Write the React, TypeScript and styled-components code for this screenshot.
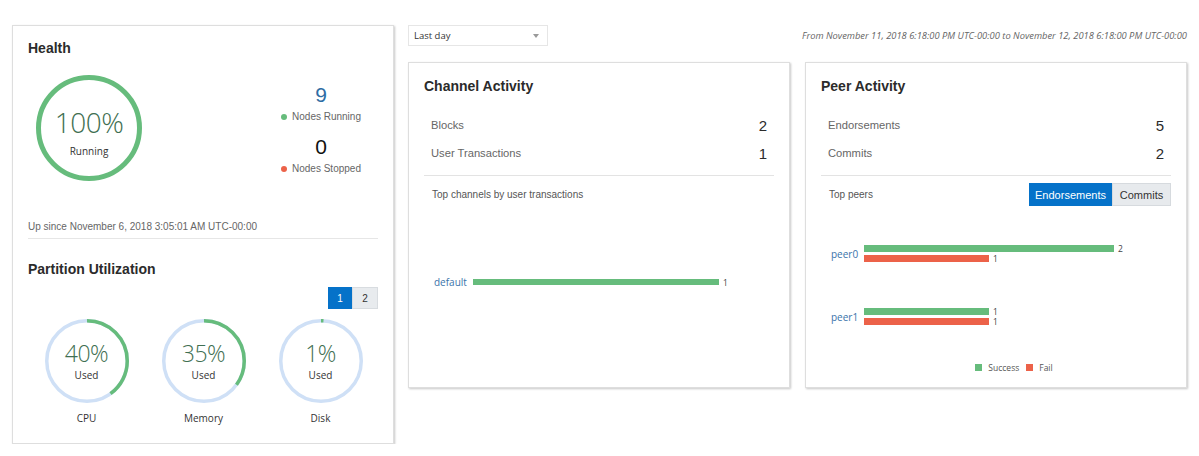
import React from "react";
import styled, { createGlobalStyle } from "styled-components";

const GREEN = "#66bc7c";
const RED = "#ec6249";
const BLUE = "#0572c9";
const TRACK = "#cfe0f6";
const SEGOE = `"Open Sans", "Noto Sans", sans-serif`;

const Global = createGlobalStyle`
  html, body { margin: 0; padding: 0; background: #fff; }
  body { font-family: "Liberation Sans", Arial, sans-serif; color: #333; }
`;

const Page = styled.div`
  display: flex;
  gap: 14px;
  padding: 25px 0 0 12px;
  width: 1199px;
  box-sizing: border-box;
`;

const Card = styled.section<{ $w: number; $h: number }>`
  width: ${(p) => p.$w}px;
  height: ${(p) => p.$h}px;
  box-sizing: border-box;
  border: 1px solid #dedede;
  box-shadow: 1px 1px 2px rgba(0, 0, 0, 0.22);
  background: #fff;
  padding: 0 15px;
  display: flex;
  flex-direction: column;
`;

const Title = styled.h2<{ $top?: number }>`
  margin: ${(p) => p.$top ?? 14}px 0 0 0;
  font-size: 14px;
  line-height: 17px;
  font-weight: 700;
  color: #2b2b2b;
`;

/* ---------- Health ---------- */

const HealthBody = styled.div`
  display: flex;
  align-items: center;
  justify-content: space-between;
  margin-top: 18px;
  padding: 0 12px 0 8px;
`;

const Ring = styled.div<{ $size: number }>`
  display: grid;
  width: ${(p) => p.$size}px;
  height: ${(p) => p.$size}px;
  & > * {
    grid-area: 1 / 1;
  }
`;

const RingText = styled.div<{ $shift: number }>`
  display: flex;
  flex-direction: column;
  align-items: center;
  justify-content: center;
  transform: translateY(${(p) => p.$shift}px);
`;

const BigPct = styled.span<{ $size: number }>`
  font-family: ${SEGOE};
  font-weight: 300;
  font-size: ${(p) => p.$size}px;
  line-height: 1;
  color: #3f6f52;
  letter-spacing: -0.5px;
`;

const RingLabel = styled.span<{ $gap: number }>`
  font-family: ${SEGOE};
  font-size: 10px;
  line-height: 12px;
  color: #333;
  margin-top: ${(p) => p.$gap}px;
`;

const Nodes = styled.div`
  display: flex;
  flex-direction: column;
  align-items: center;
  width: 90px;
`;

const NodeCount = styled.span<{ $color: string; $gap?: number }>`
  font-size: 21px;
  line-height: 28px;
  color: ${(p) => p.$color};
  margin-top: ${(p) => p.$gap ?? 0}px;
`;

const NodeLabel = styled.span<{ $dot: string }>`
  display: flex;
  align-items: center;
  gap: 5px;
  font-size: 10px;
  line-height: 12px;
  margin-top: 2px;
  color: #666;
  &::before {
    content: "";
    width: 6px;
    height: 6px;
    border-radius: 50%;
    background: ${(p) => p.$dot};
  }
`;

const UpSince = styled.div`
  margin-top: 39px;
  font-size: 10px;
  line-height: 13px;
  color: #666;
  padding-bottom: 5px;
  border-bottom: 1px solid #e6e6e6;
`;

const PagerRow = styled.div`
  display: flex;
  justify-content: flex-end;
  margin-top: 9px;
`;

const PageBtn = styled.button<{ $active?: boolean }>`
  width: ${(p) => (p.$active ? 24 : 26)}px;
  height: 22px;
  padding: 0;
  border: 1px solid ${(p) => (p.$active ? BLUE : "#d8dce0")};
  background: ${(p) => (p.$active ? BLUE : "#e8ebee")};
  color: ${(p) => (p.$active ? "#fff" : "#333")};
  font-family: "Liberation Sans", Arial, sans-serif;
  font-size: 10px;
`;

const Gauges = styled.div`
  display: grid;
  grid-template-columns: repeat(3, 117px);
  margin-top: 10px;
`;

const Gauge = styled.div`
  display: flex;
  flex-direction: column;
  align-items: center;
`;

const GaugeName = styled.span`
  font-family: ${SEGOE};
  font-size: 10px;
  line-height: 13px;
  color: #333;
  margin-top: 9px;
`;

function Arc({ size, stroke, pct, track }: { size: number; stroke: number; pct: number; track?: string }) {
  const r = (size - stroke) / 2;
  const c = 2 * Math.PI * r;
  return (
    <svg width={size} height={size} viewBox={`0 0 ${size} ${size}`}>
      {track && <circle cx={size / 2} cy={size / 2} r={r} fill="none" stroke={track} strokeWidth={stroke} />}
      <circle
        cx={size / 2}
        cy={size / 2}
        r={r}
        fill="none"
        stroke={GREEN}
        strokeWidth={stroke}
        strokeDasharray={`${(c * pct) / 100} ${c}`}
        transform={`rotate(-90 ${size / 2} ${size / 2})`}
      />
    </svg>
  );
}

/* ---------- activity cards ---------- */

const RightCol = styled.div`
  display: flex;
  flex-direction: column;
  width: 779px;
`;

const TopBar = styled.div`
  display: flex;
  justify-content: space-between;
  align-items: center;
  height: 21px;
`;

const Select = styled.div`
  width: 140px;
  height: 21px;
  box-sizing: border-box;
  border: 1px solid #e6e6e6;
  display: flex;
  align-items: center;
  justify-content: space-between;
  padding: 0 8px 0 5px;
  font-family: ${SEGOE};
  font-size: 9.5px;
  color: #333;
  &::after {
    content: "";
    border-left: 3px solid transparent;
    border-right: 3px solid transparent;
    border-top: 4px solid #9a9a9a;
  }
`;

const Range = styled.div`
  font-family: ${SEGOE};
  font-style: italic;
  font-size: 9.35px;
  color: #666;
  white-space: nowrap;
`;

const Cards = styled.div`
  display: flex;
  gap: 15px;
  margin-top: 16px;
`;

const Stats = styled.div`
  margin-top: 16px;
  padding-bottom: 8px;
  border-bottom: 1px solid #e3e3e3;
`;

const StatRow = styled.div`
  display: flex;
  justify-content: space-between;
  align-items: center;
  height: 28px;
  padding: 0 7px;
`;

const StatLabel = styled.span`
  font-size: 11.2px;
  color: #666;
`;

const StatValue = styled.span`
  font-size: 15px;
  color: #2b2b2b;
`;

const SubHeader = styled.div`
  display: flex;
  justify-content: space-between;
  align-items: center;
  height: 23px;
  margin-top: 7px;
  padding-left: 8px;
`;

const SubTitle = styled.span`
  font-size: 10px;
  color: #555;
`;

const Toggle = styled.div`
  display: flex;
`;

const ToggleBtn = styled.button<{ $active?: boolean; $w: number }>`
  width: ${(p) => p.$w}px;
  height: 23px;
  padding: 0;
  border: 1px solid ${(p) => (p.$active ? BLUE : "#d6dade")};
  background: ${(p) => (p.$active ? BLUE : "#e7eaed")};
  color: ${(p) => (p.$active ? "#fff" : "#333")};
  font-family: "Liberation Sans", Arial, sans-serif;
  font-size: 11px;
`;

const ChannelChart = styled.div`
  height: 152px;
  display: flex;
  align-items: center;
  padding-left: 10px;
`;

const ChartLabel = styled.span<{ $w: number }>`
  font-family: ${SEGOE};
  font-size: 10px;
  color: #3a73aa;
  width: ${(p) => p.$w}px;
  flex: none;
`;

const Bar = styled.div<{ $color: string; $h: number }>`
  height: ${(p) => p.$h}px;
  background: ${(p) => p.$color};
  flex: none;
`;

const BarValue = styled.span`
  font-family: ${SEGOE};
  font-size: 8.5px;
  line-height: 7px;
  color: #444;
  margin-left: 4px;
`;

const BarLine = styled.div`
  display: flex;
  align-items: center;
  height: 7px;
`;

const PeerChart = styled.div`
  display: flex;
  flex-direction: column;
  gap: 46px;
  margin-top: 39px;
  padding-left: 10px;
`;

const PeerGroup = styled.div`
  display: flex;
  align-items: center;
`;

const PeerBars = styled.div`
  display: flex;
  flex-direction: column;
  gap: 3px;
`;

const Legend = styled.div`
  display: flex;
  justify-content: center;
  align-items: center;
  gap: 7px;
  margin-top: 37px;
  padding-left: 36px;
  font-family: ${SEGOE};
  font-size: 8.5px;
  color: #555;
`;

const LegendItem = styled.span<{ $color: string }>`
  display: flex;
  align-items: center;
  gap: 6px;
  &::before {
    content: "";
    width: 7px;
    height: 7px;
    background: ${(p) => p.$color};
  }
`;

const UNIT = 125;

function PeerRow({ name, ok, fail }: { name: string; ok: number; fail: number }) {
  return (
    <PeerGroup>
      <ChartLabel $w={33}>{name}</ChartLabel>
      <PeerBars>
        <BarLine>
          <Bar $color={GREEN} $h={7} style={{ width: ok * UNIT }} />
          <BarValue>{ok}</BarValue>
        </BarLine>
        <BarLine>
          <Bar $color={RED} $h={7} style={{ width: fail * UNIT }} />
          <BarValue>{fail}</BarValue>
        </BarLine>
      </PeerBars>
    </PeerGroup>
  );
}

export default function App() {
  return (
    <>
      <Global />
      <Page>
        <Card $w={382} $h={419}>
          <Title>Health</Title>
          <HealthBody>
            <Ring $size={106}>
              <Arc size={106} stroke={5} pct={100} />
              <RingText $shift={4}>
                <BigPct $size={28}>100%</BigPct>
                <RingLabel $gap={9}>Running</RingLabel>
              </RingText>
            </Ring>
            <Nodes>
              <NodeCount $color="#2e6da4">9</NodeCount>
              <NodeLabel $dot={GREEN}>Nodes Running</NodeLabel>
              <NodeCount $color="#111" $gap={10}>0</NodeCount>
              <NodeLabel $dot={RED}>Nodes Stopped</NodeLabel>
            </Nodes>
          </HealthBody>
          <UpSince>Up since November 6, 2018 3:05:01 AM UTC-00:00</UpSince>
          <Title $top={22}>Partition Utilization</Title>
          <PagerRow>
            <PageBtn $active>1</PageBtn>
            <PageBtn>2</PageBtn>
          </PagerRow>
          <Gauges>
            {[
              { name: "CPU", pct: 40 },
              { name: "Memory", pct: 35 },
              { name: "Disk", pct: 1 },
            ].map((g) => (
              <Gauge key={g.name}>
                <Ring $size={84}>
                  <Arc size={84} stroke={3.5} pct={g.pct} track={TRACK} />
                  <RingText $shift={0}>
                    <BigPct $size={23}>{g.pct}%</BigPct>
                    <RingLabel $gap={4}>Used</RingLabel>
                  </RingText>
                </Ring>
                <GaugeName>{g.name}</GaugeName>
              </Gauge>
            ))}
          </Gauges>
        </Card>

        <RightCol>
          <TopBar>
            <Select>Last day</Select>
            <Range>From November 11, 2018 6:18:00 PM UTC-00:00 to November 12, 2018 6:18:00 PM UTC-00:00</Range>
          </TopBar>
          <Cards>
            <Card $w={382} $h={326}>
              <Title $top={15}>Channel Activity</Title>
              <Stats>
                <StatRow>
                  <StatLabel>Blocks</StatLabel>
                  <StatValue>2</StatValue>
                </StatRow>
                <StatRow>
                  <StatLabel>User Transactions</StatLabel>
                  <StatValue>1</StatValue>
                </StatRow>
              </Stats>
              <SubHeader>
                <SubTitle>Top channels by user transactions</SubTitle>
              </SubHeader>
              <ChannelChart>
                <ChartLabel $w={39}>default</ChartLabel>
                <BarLine>
                  <Bar $color={GREEN} $h={6} style={{ width: 246 }} />
                  <BarValue>1</BarValue>
                </BarLine>
              </ChannelChart>
            </Card>

            <Card $w={382} $h={326}>
              <Title $top={15}>Peer Activity</Title>
              <Stats>
                <StatRow>
                  <StatLabel>Endorsements</StatLabel>
                  <StatValue>5</StatValue>
                </StatRow>
                <StatRow>
                  <StatLabel>Commits</StatLabel>
                  <StatValue>2</StatValue>
                </StatRow>
              </Stats>
              <SubHeader>
                <SubTitle>Top peers</SubTitle>
                <Toggle>
                  <ToggleBtn $active $w={83}>Endorsements</ToggleBtn>
                  <ToggleBtn $w={59}>Commits</ToggleBtn>
                </Toggle>
              </SubHeader>
              <PeerChart>
                <PeerRow name="peer0" ok={2} fail={1} />
                <PeerRow name="peer1" ok={1} fail={1} />
              </PeerChart>
              <Legend>
                <LegendItem $color={GREEN}>Success</LegendItem>
                <LegendItem $color={RED}>Fail</LegendItem>
              </Legend>
            </Card>
          </Cards>
        </RightCol>
      </Page>
    </>
  );
}
